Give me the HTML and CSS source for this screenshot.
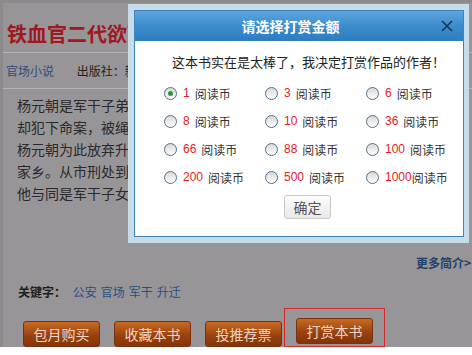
FILE: index.html
```html
<!DOCTYPE html>
<html lang="zh-CN">
<head>
    <meta charset="UTF-8">
    <title>打赏本书</title>
    <link rel="stylesheet" href="styles.css">
</head>
<body>
    <div class="page">
        <h1 class="book-title">铁血官二代欲望</h1>
        <div class="meta">
            <a class="cat">官场小说</a>
            <span class="press">出版社：新</span>
        </div>
        <div class="intro">
            <p>杨元朝是军干子弟，</p>
            <p>却犯下命案，被绳之</p>
            <p>杨元朝为此放弃升迁</p>
            <p>家乡。从市刑处到公</p>
            <p>他与同是军干子女的</p>
        </div>
        <div class="more"><a>更多简介&gt;</a></div>
        <div class="keywords">
            <b>关键字：</b>
            <a>公安</a><a>官场</a><a>军干</a><a>升迁</a>
        </div>
        <div class="actions">
            <button class="act">包月购买</button>
            <button class="act">收藏本书</button>
            <button class="act">投推荐票</button>
            <div class="mark">
                <button class="act">打赏本书</button>
            </div>
        </div>
    </div>

    <div class="dialog">
        <div class="dialog-box">
            <div class="dialog-head">
                <span class="dialog-title">请选择打赏金额</span>
                <svg class="close" width="12" height="12" viewBox="0 0 12 12">
                    <path d="M1 1 L11 11 M11 1 L1 11" stroke="#1c3552" stroke-width="1.6" fill="none"/>
                </svg>
            </div>
            <div class="dialog-body">
                <p class="msg">这本书实在是太棒了，我决定打赏作品的作者！</p>
                <div class="choices">
                    <label class="choice"><span class="radio checked"></span><em>1</em><span class="unit">阅读币</span></label>
                    <label class="choice"><span class="radio"></span><em>3</em><span class="unit">阅读币</span></label>
                    <label class="choice"><span class="radio"></span><em>6</em><span class="unit">阅读币</span></label>
                    <label class="choice"><span class="radio"></span><em>8</em><span class="unit">阅读币</span></label>
                    <label class="choice"><span class="radio"></span><em>10</em><span class="unit">阅读币</span></label>
                    <label class="choice"><span class="radio"></span><em>36</em><span class="unit">阅读币</span></label>
                    <label class="choice"><span class="radio"></span><em>66</em><span class="unit">阅读币</span></label>
                    <label class="choice"><span class="radio"></span><em>88</em><span class="unit">阅读币</span></label>
                    <label class="choice"><span class="radio"></span><em>100</em><span class="unit">阅读币</span></label>
                    <label class="choice"><span class="radio"></span><em>200</em><span class="unit">阅读币</span></label>
                    <label class="choice"><span class="radio"></span><em>500</em><span class="unit">阅读币</span></label>
                    <label class="choice"><span class="radio"></span><em class="tight">1000</em><span class="unit">阅读币</span></label>
                </div>
                <div class="ok-row">
                    <button class="ok">确定</button>
                </div>
            </div>
        </div>
    </div>
</body>
</html>
```

FILE: styles.css
```css
body {
    margin: 0;
    background: #fff;
    font-family: "Noto Sans CJK SC", "Liberation Sans", sans-serif;
    position: relative;
}
.page {
    height: 344px;
    background: #979597;
    border-top: 3px solid #8c8a8b;
    border-left: 3px solid #8c8a8b;
    overflow: hidden;
    color: #2a2a2a;
}
.book-title {
    margin: 0;
    padding: 19px 0 6px 4px;
    height: 24px;
    line-height: 24px;
    font-size: 20px;
    font-weight: bold;
    color: #a01820;
    white-space: nowrap;
    border-bottom: 1px solid #b3b1b2;
}
.meta {
    height: 35px;
    line-height: 35px;
    font-size: 12px;
    padding-left: 3px;
    border-bottom: 1px solid #b3b1b2;
    white-space: nowrap;
}
.cat {
    color: #2d4e7e;
    margin-right: 20px;
}
.press {
    color: #222;
}
.intro {
    padding: 5px 0 0 14px;
    font-size: 14px;
    line-height: 22px;
}
.intro p {
    margin: 0;
    white-space: nowrap;
}
.more {
    margin-top: 51px;
    height: 16px;
    line-height: 16px;
    padding-left: 413px;
    white-space: nowrap;
    font-size: 12px;
    font-weight: bold;
}
.more a {
    color: #243f6b;
}
.keywords {
    margin-top: 13px;
    height: 16px;
    line-height: 16px;
    padding-left: 15px;
    font-size: 12px;
}
.keywords b {
    color: #1e1e1e;
    margin-right: 4px;
}
.keywords a {
    color: #2a4f83;
    margin-right: 4px;
}
.actions {
    margin-top: 8px;
    padding-left: 20px;
    display: flex;
    align-items: flex-end;
    gap: 14px;
}
.act {
    width: 77px;
    height: 26px;
    padding: 0;
    border: 1px solid #7c3210;
    border-radius: 3px;
    background: linear-gradient(#c86a22, #9a4210 55%, #853408);
    color: #efd6c4;
    font-family: inherit;
    font-size: 14px;
    line-height: 24px;
}
.mark {
    margin-left: -12px;
    padding: 9px 11px 2px;
    border: 1px solid #d42828;
}

/* 打赏弹窗 */
.dialog {
    position: absolute;
    left: 128px;
    top: 4px;
    width: 330px;
    height: 227px;
    border: 6px solid #c7dce9;
    border-right-width: 5px;
}
.dialog-box {
    height: 225px;
    border: 1px solid #3f85bb;
    background: #fff;
}
.dialog-head {
    height: 30px;
    background: linear-gradient(#5ea6dc, #3b8ccd 50%, #2f7cc1);
    display: flex;
    align-items: center;
    justify-content: center;
    position: relative;
    padding-right: 17px;
}
.dialog-title {
    color: #fff;
    font-size: 14px;
    font-weight: bold;
}
.close {
    position: absolute;
    right: 10px;
    top: 9px;
}
.dialog-body {
    padding-top: 11px;
}
.msg {
    margin: 0;
    padding-left: 37px;
    font-size: 13px;
    line-height: 20px;
    color: #222;
    white-space: nowrap;
}
.choices {
    margin-top: 7px;
    padding-left: 29px;
    display: grid;
    grid-template-columns: 101px 101px 101px;
    grid-auto-rows: 28px;
}
.choice {
    display: flex;
    align-items: center;
    font-size: 12px;
    color: #333;
    white-space: nowrap;
}
.choice em {
    font-style: normal;
    color: #e3201f;
    font-family: "Liberation Sans", sans-serif;
    margin-right: 5px;
}
.choice em.tight {
    margin-right: 0;
}
.radio {
    width: 11px;
    height: 11px;
    border: 1px solid #50708f;
    border-radius: 50%;
    background: linear-gradient(#d8d8d8, #fff);
    margin-right: 6px;
    position: relative;
}
.radio.checked::after {
    content: "";
    position: absolute;
    left: 3px;
    top: 3px;
    width: 5px;
    height: 5px;
    border-radius: 50%;
    background: #2a9a35;
}
.ok-row {
    margin-top: 3px;
    padding-left: 149px;
}
.ok {
    width: 47px;
    height: 24px;
    padding: 0;
    border: 1px solid #c9c9c9;
    border-radius: 3px;
    background: linear-gradient(#fdfdfd, #e8e8e8);
    color: #555;
    font-family: inherit;
    font-size: 14px;
}
```
